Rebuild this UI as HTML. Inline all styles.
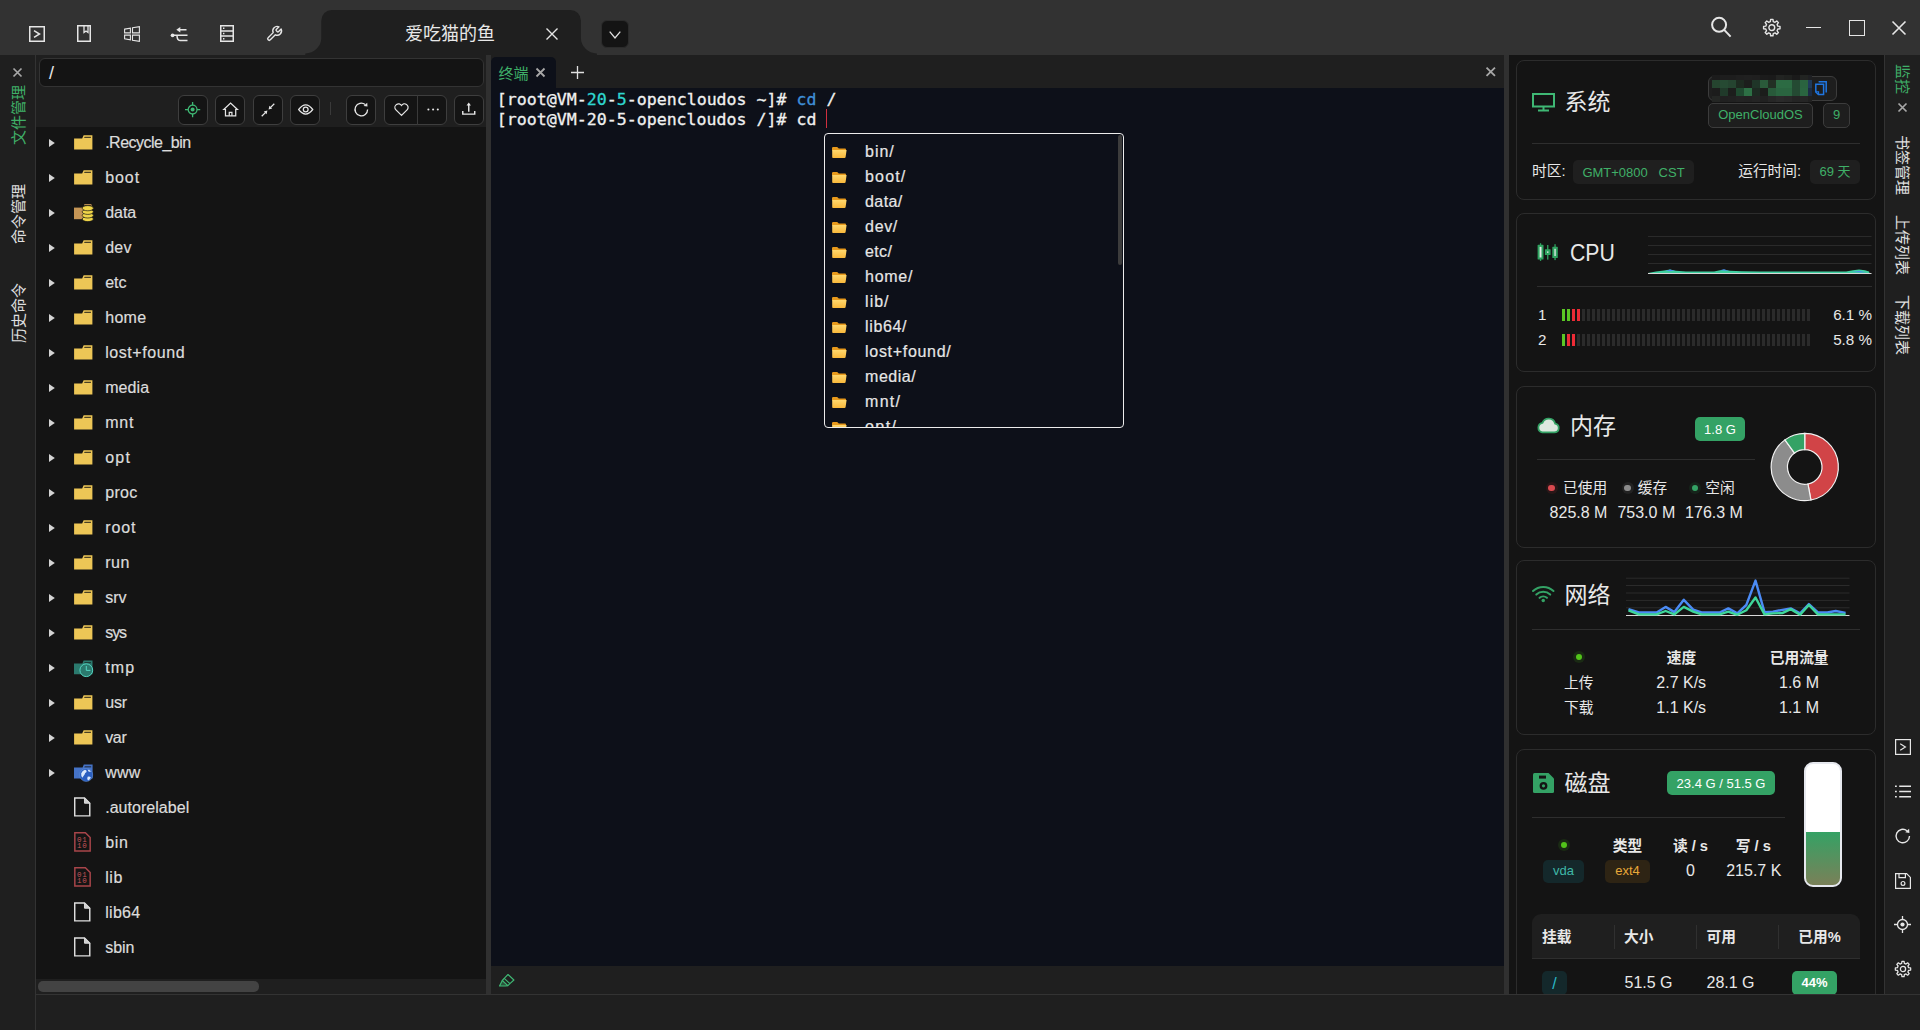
<!DOCTYPE html><html lang="zh"><head><meta charset="utf-8"><title>terminal</title><style>
*{box-sizing:border-box;margin:0;padding:0}
html,body{width:1920px;height:1030px;overflow:hidden;background:#1f1f1f}
body{position:relative;font-family:"Liberation Sans","Noto Sans CJK SC",sans-serif;color:#e0e0e0;font-size:15px;line-height:1}
.a{position:absolute}
.t{position:absolute;white-space:nowrap;line-height:1}
.c{transform:translate(-50%,-50%)}
.cy{transform:translateY(-50%)}
.b{font-weight:bold}
.g{color:#3fb068}
svg{position:absolute;overflow:visible}
.btn{position:absolute;top:95px;height:30px;width:30px;background:#141414;border:1px solid #3e3e3e;border-radius:6px}
.card{position:absolute;left:1516px;width:360px;border:1px solid #2c2c2c;border-radius:8px;background:#141414}
.hr{position:absolute;height:1px;background:#2e2e2e}
.tag{position:absolute;border-radius:5px;text-align:center;white-space:nowrap}
.mono{font-family:"DejaVu Sans Mono","Liberation Mono",monospace}
.row{position:absolute;left:36px;width:450px;height:35px}
.row svg{margin-top:0.5px}
.nm{position:absolute;left:69px;top:9px;line-height:20px;white-space:nowrap;font-size:16px;color:#dcdcdc;-webkit-text-stroke:0.2px}
.pi{position:absolute;left:865px;line-height:20px;white-space:nowrap;font-size:16px;color:#e6e6e6;-webkit-text-stroke:0.2px}
</style></head><body>
<div class="a" style="left:0;top:0;width:1920px;height:55px;background:#323232"></div>
<svg style="left:300px;top:0" width="310" height="55" viewBox="300 0 310 55"><path d="M305.3 55 V53.4 A16 15.6 0 0 0 321.3 37.8 V20.4 A10.5 10.5 0 0 1 331.8 9.9 H570.4 A10.5 10.5 0 0 1 580.9 20.4 V37.8 A16 15.6 0 0 0 596.9 53.4 V55 Z" fill="#1f1f1f"/></svg>
<div class="t c" style="left:450px;top:33.5px;font-size:18px;color:#e8e8e8">爱吃猫的鱼</div>
<svg style="left:545.7px;top:27.8px" width="12" height="12" viewBox="0 0 12 12"><path d="M0.5 0.5 L11.5 11.5 M11.5 0.5 L0.5 11.5" stroke="#e6e6e6" stroke-width="1.4" fill="none"/></svg>
<div class="a" style="left:601px;top:19.6px;width:28.3px;height:28.3px;background:#141414;border:1px solid #2b2b2b;border-radius:6px"></div>
<svg style="left:609px;top:30.6px" width="12" height="8" viewBox="0 0 12 8"><path d="M0.7 0.7 L6 7 L11.3 0.7" stroke="#e0e0e0" stroke-width="1.3" fill="none"/></svg>
<svg style="left:29px;top:26px" width="16" height="16" viewBox="0 0 16 16" fill="none" stroke="#e6e6e6" stroke-width="1.5"><rect x="0.75" y="0.75" width="14.5" height="14.5"/><path d="M5 4.6 L10.5 8 L5 11.4"/></svg>
<svg style="left:77px;top:25px" width="14" height="17" viewBox="0 0 14 17" fill="none" stroke="#e6e6e6" stroke-width="1.5"><rect x="0.75" y="0.75" width="12.5" height="15.5"/><path d="M7 0.75 V7.5 L9 6 L11 7.5 V0.75" stroke-width="1.3"/></svg>
<svg style="left:124px;top:26px" width="16" height="16" viewBox="0 0 16 16" fill="none" stroke="#e6e6e6" stroke-width="1.1"><path d="M0.6 3.1 L6.4 2.1 V6.9 H0.6 Z M8.5 1.8 L15.4 0.6 V6.9 H8.5 Z M0.6 9.1 H6.4 V13.9 L0.6 12.9 Z M8.5 9.1 H15.4 V15.4 L8.5 14.2 Z"/></svg>
<svg style="left:170px;top:26px" width="19" height="16" viewBox="0 0 19 16" fill="none" stroke="#e6e6e6" stroke-width="1.5"><circle cx="2.6" cy="9.3" r="1.9" fill="#e6e6e6" stroke="none"/><path d="M3 9.3 H17.5 M9 3.7 H16.5 M7 9.3 Q7 14.5 10 14.5 H17.5"/><path d="M6.3 3.7 L10.3 1 V6.4 Z" fill="#e6e6e6" stroke="none"/></svg>
<svg style="left:220px;top:25px" width="14" height="17" viewBox="0 0 14 17" fill="none" stroke="#e6e6e6" stroke-width="1.5"><rect x="0.75" y="0.75" width="12.5" height="15.5"/><path d="M0.75 5.9 H13.25 M0.75 11.1 H13.25"/><path d="M3 3.3 h1.4 M3 8.5 h1.4 M3 13.7 h1.4" stroke-width="1.4"/></svg>
<svg style="left:265px;top:25px" width="18.5" height="17.5" viewBox="0 0 24 24" fill="none" stroke="#e6e6e6" stroke-width="1.9" stroke-linejoin="round"><path d="M14.7 6.3a1 1 0 0 0 0 1.4l1.6 1.6a1 1 0 0 0 1.4 0l3.77-3.77a6 6 0 0 1-7.94 7.94l-6.91 6.91a2.12 2.12 0 0 1-3-3l6.91-6.91a6 6 0 0 1 7.94-7.94l-3.76 3.76z"/></svg>
<svg style="left:1710px;top:16px" width="22" height="22" viewBox="0 0 22 22" fill="none" stroke="#e6e6e6" stroke-width="2"><circle cx="9.1" cy="8.8" r="7"/><path d="M14.2 13.9 L20.6 20.6"/></svg>
<svg style="left:1762px;top:18px" width="20" height="20" viewBox="0 0 20 20" fill="none" stroke="#e6e6e6" stroke-width="1.4" stroke-linejoin="round"><path d="M8.35 3.57 L8.63 1.38 L10.97 1.38 L11.25 3.57 L13.04 4.31 L14.78 2.96 L16.44 4.62 L15.09 6.36 L15.83 8.15 L18.02 8.43 L18.02 10.77 L15.83 11.05 L15.09 12.84 L16.44 14.58 L14.78 16.24 L13.04 14.89 L11.25 15.63 L10.97 17.82 L8.63 17.82 L8.35 15.63 L6.56 14.89 L4.82 16.24 L3.16 14.58 L4.51 12.84 L3.77 11.05 L1.58 10.77 L1.58 8.43 L3.77 8.15 L4.51 6.36 L3.16 4.62 L4.82 2.96 L6.56 4.31 Z"/><circle cx="9.8" cy="9.6" r="2.9"/></svg>
<div class="a" style="left:1806px;top:27px;width:15px;height:1.4px;background:#e6e6e6"></div>
<div class="a" style="left:1849px;top:20px;width:16px;height:16px;border:1.6px solid #e6e6e6"></div>
<svg style="left:1892px;top:21px" width="14" height="14" viewBox="0 0 14 14"><path d="M0.5 0.5 L13.5 13.5 M13.5 0.5 L0.5 13.5" stroke="#e6e6e6" stroke-width="1.6" fill="none"/></svg>
<div class="a" style="left:0;top:55px;width:36px;height:975px;background:#1f1f1f;border-right:1px solid #333"></div>
<svg style="left:12.7px;top:67.7px" width="9" height="9" viewBox="0 0 9 9"><path d="M0.5 0.5 L8.5 8.5 M8.5 0.5 L0.5 8.5" stroke="#a8a8a8" stroke-width="1.7" fill="none"/></svg>
<div class="t g" style="left:18.2px;top:114.8px;font-size:15px;transform:translate(-50%,-50%) rotate(-90deg)">文件管理</div>
<div class="t " style="left:18.2px;top:213.8px;font-size:15px;transform:translate(-50%,-50%) rotate(-90deg)">命令管理</div>
<div class="t " style="left:18.2px;top:313.2px;font-size:15px;transform:translate(-50%,-50%) rotate(-90deg)">历史命令</div>
<div class="a" style="left:36px;top:55px;width:450px;height:72px;background:#1f1f1f"></div>
<div class="a" style="left:36px;top:127px;width:450px;height:852px;background:#141414"></div>
<div class="a" style="left:39px;top:58px;width:445px;height:29px;background:#141414;border:1px solid #333;border-radius:6px"></div>
<div class="t cy" style="left:49px;top:73.4px;font-size:18px;color:#e8e8e8">/</div>
<div class="btn" style="left:178px;width:30px"></div>
<div class="btn" style="left:215px;width:30px"></div>
<div class="btn" style="left:253px;width:30px"></div>
<div class="btn" style="left:290px;width:30px"></div>
<div class="btn" style="left:346px;width:30px"></div>
<div class="btn" style="left:454px;width:30px"></div>
<div class="btn" style="left:384px;width:63px"></div><div class="a" style="left:417px;top:95px;width:1px;height:30px;background:#3a3a3a"></div>
<div class="a" style="left:330px;top:102px;width:1px;height:13px;background:#3a3a3a"></div>
<svg style="left:185px;top:102px" width="16" height="16" viewBox="0 0 16 16" fill="none" stroke="#3fb874" stroke-width="1.3"><circle cx="7.6" cy="7.6" r="4.4"/><circle cx="7.6" cy="7.6" r="2" fill="#3fb874" stroke="none"/><path d="M7.6 0 V3.2 M7.6 12 V15.2 M0 7.6 H3.2 M12 7.6 H15.2"/></svg>
<svg style="left:223px;top:102px" width="15.2" height="14.8" viewBox="0 0 16 15" fill="none" stroke="#e6e6e6" stroke-width="1.3"><path d="M0.8 7.6 L8 0.9 L15.2 7.6 H13.4 V14.2 H2.6 V7.6 Z"/><path d="M6.6 14.2 V10.6 H9.4 V14.2"/></svg>
<svg style="left:260.5px;top:103px" width="14" height="14" viewBox="0 0 14 14" fill="#e6e6e6" stroke="#e6e6e6" stroke-width="1.3"><path d="M13.3 0.7 L9.6 4.4 M0.7 13.3 L4.4 9.6" fill="none"/><path d="M7.6 6.4 L8.4 2.8 L11.2 5.6 Z M6.4 7.6 L5.6 11.2 L2.8 8.4 Z" stroke="none"/></svg>
<svg style="left:297.8px;top:104px" width="15.4" height="11" viewBox="0 0 16 11" fill="none" stroke="#e6e6e6" stroke-width="1.3"><path d="M0.7 5.5 Q8 -4 15.3 5.5 Q8 15 0.7 5.5 Z"/><circle cx="8" cy="5.5" r="2.5"/></svg>
<svg style="left:354.3px;top:101.9px" width="15" height="15" viewBox="0 0 15 15" fill="none" stroke="#e6e6e6" stroke-width="1.3"><path d="M13.6 7.5 A6.3 6.3 0 1 1 11.2 2.55"/><path d="M9.6 3.9 L13.5 4.6 L13.2 0.7 Z" fill="#e6e6e6" stroke="none"/></svg>
<svg style="left:393.8px;top:103px" width="15" height="13.2" viewBox="0 0 16 14" fill="none" stroke="#e6e6e6" stroke-width="1.3"><path d="M8 13.2 L1.6 6.8 A3.7 3.7 0 0 1 8 2.6 A3.7 3.7 0 0 1 14.4 6.8 Z"/></svg>
<svg style="left:426.5px;top:108px" width="13" height="3" viewBox="0 0 13 3" fill="#e6e6e6"><circle cx="1.4" cy="1.5" r="1.05"/><circle cx="6.1" cy="1.5" r="1.05"/><circle cx="10.8" cy="1.5" r="1.05"/></svg>
<svg style="left:461.7px;top:102px" width="13.5" height="13.5" viewBox="0 0 14 14" fill="none" stroke="#e6e6e6" stroke-width="1.5"><path d="M0.8 9.4 V12.6 H13.2 V9.4"/><path d="M7 10 V2.4"/><path d="M4.7 3.6 L7 0.6 L9.3 3.6 Z" fill="#e6e6e6" stroke="none"/></svg>
<div class="row" style="top:124px"><svg style="left:12.6px;top:14px" width="6" height="8" viewBox="0 0 6 8"><path d="M0 0 L5.8 4 L0 8 Z" fill="#d4d4d4"/></svg><svg style="left:37.8px;top:10.3px" width="18.7" height="14.6" viewBox="0 0 19 15"><path d="M0 3.6 H8.3 L9.8 0.3 H18.8 V14.8 H0 Z" fill="#edc656"/><path d="M10.8 1.9 H17.3 V3.1 H10.2 Z" fill="#141414" opacity=".75"/></svg><span class="nm" style="left:69.20px;letter-spacing:-0.51px">.Recycle_bin</span></div>
<div class="row" style="top:159px"><svg style="left:12.6px;top:14px" width="6" height="8" viewBox="0 0 6 8"><path d="M0 0 L5.8 4 L0 8 Z" fill="#d4d4d4"/></svg><svg style="left:37.8px;top:10.3px" width="18.7" height="14.6" viewBox="0 0 19 15"><path d="M0 3.6 H8.3 L9.8 0.3 H18.8 V14.8 H0 Z" fill="#edc656"/><path d="M10.8 1.9 H17.3 V3.1 H10.2 Z" fill="#141414" opacity=".75"/></svg><span class="nm" style="left:69.20px;letter-spacing:0.92px">boot</span></div>
<div class="row" style="top:194px"><svg style="left:12.6px;top:14px" width="6" height="8" viewBox="0 0 6 8"><path d="M0 0 L5.8 4 L0 8 Z" fill="#d4d4d4"/></svg><svg style="left:37.8px;top:7.5px" width="20" height="22" viewBox="0 0 20 22"><path d="M0 5.6 H9.3 V17.2 H0 Z" fill="#c59555"/><path d="M10.5 3.4 V2.6 H17.2 V4" stroke="#c59555" stroke-width="1" fill="none"/><g fill="#f0d548" stroke="#141414" stroke-width="0.7"><ellipse cx="13.8" cy="17" rx="5.6" ry="2.6"/><ellipse cx="13.8" cy="13.4" rx="5.6" ry="2.6"/><ellipse cx="13.8" cy="9.8" rx="5.6" ry="2.6"/><ellipse cx="13.8" cy="6.2" rx="5.6" ry="2.6"/></g></svg><span class="nm" style="left:69.20px;letter-spacing:-0.05px">data</span></div>
<div class="row" style="top:229px"><svg style="left:12.6px;top:14px" width="6" height="8" viewBox="0 0 6 8"><path d="M0 0 L5.8 4 L0 8 Z" fill="#d4d4d4"/></svg><svg style="left:37.8px;top:10.3px" width="18.7" height="14.6" viewBox="0 0 19 15"><path d="M0 3.6 H8.3 L9.8 0.3 H18.8 V14.8 H0 Z" fill="#edc656"/><path d="M10.8 1.9 H17.3 V3.1 H10.2 Z" fill="#141414" opacity=".75"/></svg><span class="nm" style="left:69.20px;letter-spacing:0.23px">dev</span></div>
<div class="row" style="top:264px"><svg style="left:12.6px;top:14px" width="6" height="8" viewBox="0 0 6 8"><path d="M0 0 L5.8 4 L0 8 Z" fill="#d4d4d4"/></svg><svg style="left:37.8px;top:10.3px" width="18.7" height="14.6" viewBox="0 0 19 15"><path d="M0 3.6 H8.3 L9.8 0.3 H18.8 V14.8 H0 Z" fill="#edc656"/><path d="M10.8 1.9 H17.3 V3.1 H10.2 Z" fill="#141414" opacity=".75"/></svg><span class="nm" style="left:69.20px;letter-spacing:-0.04px">etc</span></div>
<div class="row" style="top:299px"><svg style="left:12.6px;top:14px" width="6" height="8" viewBox="0 0 6 8"><path d="M0 0 L5.8 4 L0 8 Z" fill="#d4d4d4"/></svg><svg style="left:37.8px;top:10.3px" width="18.7" height="14.6" viewBox="0 0 19 15"><path d="M0 3.6 H8.3 L9.8 0.3 H18.8 V14.8 H0 Z" fill="#edc656"/><path d="M10.8 1.9 H17.3 V3.1 H10.2 Z" fill="#141414" opacity=".75"/></svg><span class="nm" style="left:69.20px;letter-spacing:0.30px">home</span></div>
<div class="row" style="top:334px"><svg style="left:12.6px;top:14px" width="6" height="8" viewBox="0 0 6 8"><path d="M0 0 L5.8 4 L0 8 Z" fill="#d4d4d4"/></svg><svg style="left:37.8px;top:10.3px" width="18.7" height="14.6" viewBox="0 0 19 15"><path d="M0 3.6 H8.3 L9.8 0.3 H18.8 V14.8 H0 Z" fill="#edc656"/><path d="M10.8 1.9 H17.3 V3.1 H10.2 Z" fill="#141414" opacity=".75"/></svg><span class="nm" style="left:69.20px;letter-spacing:0.57px">lost+found</span></div>
<div class="row" style="top:369px"><svg style="left:12.6px;top:14px" width="6" height="8" viewBox="0 0 6 8"><path d="M0 0 L5.8 4 L0 8 Z" fill="#d4d4d4"/></svg><svg style="left:37.8px;top:10.3px" width="18.7" height="14.6" viewBox="0 0 19 15"><path d="M0 3.6 H8.3 L9.8 0.3 H18.8 V14.8 H0 Z" fill="#edc656"/><path d="M10.8 1.9 H17.3 V3.1 H10.2 Z" fill="#141414" opacity=".75"/></svg><span class="nm" style="left:69.20px;letter-spacing:0.09px">media</span></div>
<div class="row" style="top:404px"><svg style="left:12.6px;top:14px" width="6" height="8" viewBox="0 0 6 8"><path d="M0 0 L5.8 4 L0 8 Z" fill="#d4d4d4"/></svg><svg style="left:37.8px;top:10.3px" width="18.7" height="14.6" viewBox="0 0 19 15"><path d="M0 3.6 H8.3 L9.8 0.3 H18.8 V14.8 H0 Z" fill="#edc656"/><path d="M10.8 1.9 H17.3 V3.1 H10.2 Z" fill="#141414" opacity=".75"/></svg><span class="nm" style="left:69.20px;letter-spacing:0.84px">mnt</span></div>
<div class="row" style="top:439px"><svg style="left:12.6px;top:14px" width="6" height="8" viewBox="0 0 6 8"><path d="M0 0 L5.8 4 L0 8 Z" fill="#d4d4d4"/></svg><svg style="left:37.8px;top:10.3px" width="18.7" height="14.6" viewBox="0 0 19 15"><path d="M0 3.6 H8.3 L9.8 0.3 H18.8 V14.8 H0 Z" fill="#edc656"/><path d="M10.8 1.9 H17.3 V3.1 H10.2 Z" fill="#141414" opacity=".75"/></svg><span class="nm" style="left:69.20px;letter-spacing:1.27px">opt</span></div>
<div class="row" style="top:474px"><svg style="left:12.6px;top:14px" width="6" height="8" viewBox="0 0 6 8"><path d="M0 0 L5.8 4 L0 8 Z" fill="#d4d4d4"/></svg><svg style="left:37.8px;top:10.3px" width="18.7" height="14.6" viewBox="0 0 19 15"><path d="M0 3.6 H8.3 L9.8 0.3 H18.8 V14.8 H0 Z" fill="#edc656"/><path d="M10.8 1.9 H17.3 V3.1 H10.2 Z" fill="#141414" opacity=".75"/></svg><span class="nm" style="left:69.20px;letter-spacing:0.33px">proc</span></div>
<div class="row" style="top:509px"><svg style="left:12.6px;top:14px" width="6" height="8" viewBox="0 0 6 8"><path d="M0 0 L5.8 4 L0 8 Z" fill="#d4d4d4"/></svg><svg style="left:37.8px;top:10.3px" width="18.7" height="14.6" viewBox="0 0 19 15"><path d="M0 3.6 H8.3 L9.8 0.3 H18.8 V14.8 H0 Z" fill="#edc656"/><path d="M10.8 1.9 H17.3 V3.1 H10.2 Z" fill="#141414" opacity=".75"/></svg><span class="nm" style="left:69.20px;letter-spacing:0.89px">root</span></div>
<div class="row" style="top:544px"><svg style="left:12.6px;top:14px" width="6" height="8" viewBox="0 0 6 8"><path d="M0 0 L5.8 4 L0 8 Z" fill="#d4d4d4"/></svg><svg style="left:37.8px;top:10.3px" width="18.7" height="14.6" viewBox="0 0 19 15"><path d="M0 3.6 H8.3 L9.8 0.3 H18.8 V14.8 H0 Z" fill="#edc656"/><path d="M10.8 1.9 H17.3 V3.1 H10.2 Z" fill="#141414" opacity=".75"/></svg><span class="nm" style="left:69.20px;letter-spacing:0.54px">run</span></div>
<div class="row" style="top:579px"><svg style="left:12.6px;top:14px" width="6" height="8" viewBox="0 0 6 8"><path d="M0 0 L5.8 4 L0 8 Z" fill="#d4d4d4"/></svg><svg style="left:37.8px;top:10.3px" width="18.7" height="14.6" viewBox="0 0 19 15"><path d="M0 3.6 H8.3 L9.8 0.3 H18.8 V14.8 H0 Z" fill="#edc656"/><path d="M10.8 1.9 H17.3 V3.1 H10.2 Z" fill="#141414" opacity=".75"/></svg><span class="nm" style="left:69.20px;letter-spacing:-0.04px">srv</span></div>
<div class="row" style="top:614px"><svg style="left:12.6px;top:14px" width="6" height="8" viewBox="0 0 6 8"><path d="M0 0 L5.8 4 L0 8 Z" fill="#d4d4d4"/></svg><svg style="left:37.8px;top:10.3px" width="18.7" height="14.6" viewBox="0 0 19 15"><path d="M0 3.6 H8.3 L9.8 0.3 H18.8 V14.8 H0 Z" fill="#edc656"/><path d="M10.8 1.9 H17.3 V3.1 H10.2 Z" fill="#141414" opacity=".75"/></svg><span class="nm" style="left:69.20px;letter-spacing:-1.05px">sys</span></div>
<div class="row" style="top:649px"><svg style="left:12.6px;top:14px" width="6" height="8" viewBox="0 0 6 8"><path d="M0 0 L5.8 4 L0 8 Z" fill="#d4d4d4"/></svg><svg style="left:37.8px;top:8px" width="20" height="20" viewBox="0 0 20 20"><path d="M0 5.4 H8.4 L9.6 2.5 H18.5 V16.3 H0 Z" fill="#2b7a6e"/><path d="M10.6 4 H17 V5.2 H10.1 Z" fill="#141414" opacity=".6"/><circle cx="12.3" cy="12.2" r="6.4" fill="#2b7a6e" stroke="#55d6c2" stroke-width="1"/><path d="M12.3 8 V12.4 H16.4" stroke="#55d6c2" stroke-width="1" fill="none"/></svg><span class="nm" style="left:69.20px;letter-spacing:1.19px">tmp</span></div>
<div class="row" style="top:684px"><svg style="left:12.6px;top:14px" width="6" height="8" viewBox="0 0 6 8"><path d="M0 0 L5.8 4 L0 8 Z" fill="#d4d4d4"/></svg><svg style="left:37.8px;top:10.3px" width="18.7" height="14.6" viewBox="0 0 19 15"><path d="M0 3.6 H8.3 L9.8 0.3 H18.8 V14.8 H0 Z" fill="#edc656"/><path d="M10.8 1.9 H17.3 V3.1 H10.2 Z" fill="#141414" opacity=".75"/></svg><span class="nm" style="left:69.20px;letter-spacing:-0.12px">usr</span></div>
<div class="row" style="top:719px"><svg style="left:12.6px;top:14px" width="6" height="8" viewBox="0 0 6 8"><path d="M0 0 L5.8 4 L0 8 Z" fill="#d4d4d4"/></svg><svg style="left:37.8px;top:10.3px" width="18.7" height="14.6" viewBox="0 0 19 15"><path d="M0 3.6 H8.3 L9.8 0.3 H18.8 V14.8 H0 Z" fill="#edc656"/><path d="M10.8 1.9 H17.3 V3.1 H10.2 Z" fill="#141414" opacity=".75"/></svg><span class="nm" style="left:69.20px;letter-spacing:-0.33px">var</span></div>
<div class="row" style="top:754px"><svg style="left:12.6px;top:14px" width="6" height="8" viewBox="0 0 6 8"><path d="M0 0 L5.8 4 L0 8 Z" fill="#d4d4d4"/></svg><svg style="left:37.8px;top:8px" width="20" height="20" viewBox="0 0 20 20"><path d="M0 4.6 H8.6 L9.8 1.6 H18.6 V15.6 H0 Z" fill="#4573c7"/><path d="M10.8 3 H17.2 V4.4 H10.3 Z" fill="#141414" opacity=".55"/><circle cx="12.2" cy="12" r="6.5" fill="#2b5fc0"/><circle cx="12.2" cy="12" r="6.5" fill="none" stroke="#6ea0e8" stroke-width=".6" opacity=".7"/><path d="M7.2 10.2 q1.2 -2.8 3.8 -3.4 q2 .4 1.6 2.2 q-1.8 .6 -2 2.4 q-1.4 1.6 -2.2 3.4 q-1.6 -2 -1.2 -4.6 Z M13.6 13.8 q1.8 -.8 3.2 .4 q-.4 2.4 -2.6 3.4 q-1.6 -1.4 -.6 -3.8 Z M13.6 6.4 q2 .2 3.4 2 q-1.6 .8 -2.6 -.2 Z" fill="#e6f1ff" opacity=".95"/></svg><span class="nm" style="left:69.33px;letter-spacing:0.21px">www</span></div>
<div class="row" style="top:789px"><svg style="left:38.2px;top:7.8px" width="16.5" height="19.8" viewBox="0 0 17 20" fill="none" stroke="#dedede" stroke-width="1.5"><path d="M0.75 0.75 H10.8 L16.25 6.2 V19.25 H0.75 Z"/><path d="M10.8 0.75 V6.2 H16.25 Z" fill="#cfcfcf" stroke-width="1"/></svg><span class="nm" style="left:69.20px;letter-spacing:0.04px">.autorelabel</span></div>
<div class="row" style="top:824px"><svg style="left:38px;top:7.9px" width="17" height="19.8" viewBox="0 0 17 20" fill="none" stroke="#a8454a" stroke-width="1.5"><path d="M0.75 0.75 H11.4 L16.25 5.6 V19.25 H0.75 Z"/><text x="3" y="9.9" font-family="Liberation Mono,monospace" font-size="7.6" letter-spacing=".6" fill="#c4545a" stroke="none">01</text><text x="3" y="16.2" font-family="Liberation Mono,monospace" font-size="7.6" letter-spacing=".6" fill="#c4545a" stroke="none">10</text></svg><span class="nm" style="left:69.20px;letter-spacing:0.71px">bin</span></div>
<div class="row" style="top:859px"><svg style="left:38px;top:7.9px" width="17" height="19.8" viewBox="0 0 17 20" fill="none" stroke="#a8454a" stroke-width="1.5"><path d="M0.75 0.75 H11.4 L16.25 5.6 V19.25 H0.75 Z"/><text x="3" y="9.9" font-family="Liberation Mono,monospace" font-size="7.6" letter-spacing=".6" fill="#c4545a" stroke="none">01</text><text x="3" y="16.2" font-family="Liberation Mono,monospace" font-size="7.6" letter-spacing=".6" fill="#c4545a" stroke="none">10</text></svg><span class="nm" style="left:69.20px;letter-spacing:0.55px">lib</span></div>
<div class="row" style="top:894px"><svg style="left:38.2px;top:7.8px" width="16.5" height="19.8" viewBox="0 0 17 20" fill="none" stroke="#dedede" stroke-width="1.5"><path d="M0.75 0.75 H10.8 L16.25 6.2 V19.25 H0.75 Z"/><path d="M10.8 0.75 V6.2 H16.25 Z" fill="#cfcfcf" stroke-width="1"/></svg><span class="nm" style="left:69.20px;letter-spacing:0.29px">lib64</span></div>
<div class="row" style="top:929px"><svg style="left:38.2px;top:7.8px" width="16.5" height="19.8" viewBox="0 0 17 20" fill="none" stroke="#dedede" stroke-width="1.5"><path d="M0.75 0.75 H10.8 L16.25 6.2 V19.25 H0.75 Z"/><path d="M10.8 0.75 V6.2 H16.25 Z" fill="#cfcfcf" stroke-width="1"/></svg><span class="nm" style="left:69.20px;letter-spacing:-0.06px">sbin</span></div>
<div class="a" style="left:36px;top:979px;width:450px;height:15px;background:#1f1f1f"></div>
<div class="a" style="left:38px;top:981px;width:221px;height:10.5px;background:#434343;border-radius:5px"></div>
<div class="a" style="left:486px;top:55px;width:5px;height:939px;background:#303030"></div>
<div class="a" style="left:491px;top:55px;width:1013px;height:33px;background:#1f1f1f"></div>
<div class="a" style="left:491px;top:57px;width:65px;height:31px;background:#0d1019;border-radius:5px 5px 0 0"></div>
<div class="t cy g" style="left:498.5px;top:72.5px;font-size:15px">终端</div>
<svg style="left:536px;top:68.1px" width="9" height="9" viewBox="0 0 9 9"><path d="M0.5 0.5 L8.5 8.5 M8.5 0.5 L0.5 8.5" stroke="#a8a8a8" stroke-width="1.8" fill="none"/></svg>
<svg style="left:571.2px;top:65.8px" width="13" height="13" viewBox="0 0 13 13"><path d="M6.5 0 V13 M0 6.5 H13" stroke="#e0e0e0" stroke-width="1.3" fill="none"/></svg>
<svg style="left:1486px;top:67px" width="9.5" height="9.5" viewBox="0 0 9 9"><path d="M0.5 0.5 L8.5 8.5 M8.5 0.5 L0.5 8.5" stroke="#a8a8a8" stroke-width="1.7" fill="none"/></svg>
<div class="a" style="left:491px;top:88px;width:1013px;height:878px;background:#0d1019"></div>
<div class="a" style="left:491px;top:966px;width:1013px;height:28px;background:#1f1f1f"></div>
<div class="t mono" style="left:496.8px;top:89.8px;font-size:16.6px;line-height:20.3px;color:#f0f0f0;white-space:pre;-webkit-text-stroke:0.3px">[root@VM-<span style="color:#2fd6d0">20</span>-<span style="color:#2fd6d0">5</span>-opencloudos ~]# <span style="color:#3f8fd8">cd</span> /<br>[root@VM-20-5-opencloudos /]# cd </div>
<div class="a" style="left:826px;top:108.5px;width:1.3px;height:19px;background:#d02f3f"></div>
<svg style="left:499px;top:974.3px" width="16" height="13" viewBox="0 0 16 13" fill="none" stroke="#3fb874" stroke-width="1.15" stroke-linejoin="round"><path d="M9 0.5 L14.9 6 L10.9 9.7 L5.2 4.3 Z"/><path d="M5.2 4.3 L3.3 6.5 L8.9 11.6 L10.9 9.7"/><path d="M3.3 6.5 L0.5 12 H6.4 L8.9 11.6" fill="#3fb874" fill-opacity=".35"/></svg>
<div class="a" style="left:824px;top:133px;width:300px;height:295px;background:#0d1019;border:1.5px solid #ececec;border-radius:4px;overflow:hidden"></div>
<div class="a" style="left:1118px;top:135px;width:4px;height:130px;background:#3c3c3c;border-radius:2px"></div>
<div class="a" style="left:825.5px;top:134.5px;width:297px;height:292px;overflow:hidden">
<svg style="left:6.5px;top:12.0px" width="15" height="11" viewBox="0 0 15 11"><defs><linearGradient id="fg0" x1="0" y1="0" x2="0" y2="1"><stop offset="0" stop-color="#ffd86e"/><stop offset="1" stop-color="#f9b83a"/></linearGradient></defs><path d="M0 1.2 Q0 0 1.2 0 H5.2 L6.8 1.6 H13 Q14 1.6 14 2.6 V3.4 H0 Z" fill="#e89a1c"/><path d="M0.2 3 H14.6 L13.6 10 Q13.5 11 12.5 11 H1 Q0.2 11 0.2 10 Z" fill="url(#fg0)"/></svg>
<span class="pi" style="left:39.60px;top:7.5px;letter-spacing:0.97px">bin/</span>
<svg style="left:6.5px;top:37.0px" width="15" height="11" viewBox="0 0 15 11"><defs><linearGradient id="fg1" x1="0" y1="0" x2="0" y2="1"><stop offset="0" stop-color="#ffd86e"/><stop offset="1" stop-color="#f9b83a"/></linearGradient></defs><path d="M0 1.2 Q0 0 1.2 0 H5.2 L6.8 1.6 H13 Q14 1.6 14 2.6 V3.4 H0 Z" fill="#e89a1c"/><path d="M0.2 3 H14.6 L13.6 10 Q13.5 11 12.5 11 H1 Q0.2 11 0.2 10 Z" fill="url(#fg1)"/></svg>
<span class="pi" style="left:39.60px;top:32.5px;letter-spacing:1.12px">boot/</span>
<svg style="left:6.5px;top:62.0px" width="15" height="11" viewBox="0 0 15 11"><defs><linearGradient id="fg2" x1="0" y1="0" x2="0" y2="1"><stop offset="0" stop-color="#ffd86e"/><stop offset="1" stop-color="#f9b83a"/></linearGradient></defs><path d="M0 1.2 Q0 0 1.2 0 H5.2 L6.8 1.6 H13 Q14 1.6 14 2.6 V3.4 H0 Z" fill="#e89a1c"/><path d="M0.2 3 H14.6 L13.6 10 Q13.5 11 12.5 11 H1 Q0.2 11 0.2 10 Z" fill="url(#fg2)"/></svg>
<span class="pi" style="left:39.60px;top:57.5px;letter-spacing:0.37px">data/</span>
<svg style="left:6.5px;top:87.0px" width="15" height="11" viewBox="0 0 15 11"><defs><linearGradient id="fg3" x1="0" y1="0" x2="0" y2="1"><stop offset="0" stop-color="#ffd86e"/><stop offset="1" stop-color="#f9b83a"/></linearGradient></defs><path d="M0 1.2 Q0 0 1.2 0 H5.2 L6.8 1.6 H13 Q14 1.6 14 2.6 V3.4 H0 Z" fill="#e89a1c"/><path d="M0.2 3 H14.6 L13.6 10 Q13.5 11 12.5 11 H1 Q0.2 11 0.2 10 Z" fill="url(#fg3)"/></svg>
<span class="pi" style="left:39.60px;top:82.5px;letter-spacing:0.65px">dev/</span>
<svg style="left:6.5px;top:112.0px" width="15" height="11" viewBox="0 0 15 11"><defs><linearGradient id="fg4" x1="0" y1="0" x2="0" y2="1"><stop offset="0" stop-color="#ffd86e"/><stop offset="1" stop-color="#f9b83a"/></linearGradient></defs><path d="M0 1.2 Q0 0 1.2 0 H5.2 L6.8 1.6 H13 Q14 1.6 14 2.6 V3.4 H0 Z" fill="#e89a1c"/><path d="M0.2 3 H14.6 L13.6 10 Q13.5 11 12.5 11 H1 Q0.2 11 0.2 10 Z" fill="url(#fg4)"/></svg>
<span class="pi" style="left:39.60px;top:107.5px;letter-spacing:0.34px">etc/</span>
<svg style="left:6.5px;top:137.0px" width="15" height="11" viewBox="0 0 15 11"><defs><linearGradient id="fg5" x1="0" y1="0" x2="0" y2="1"><stop offset="0" stop-color="#ffd86e"/><stop offset="1" stop-color="#f9b83a"/></linearGradient></defs><path d="M0 1.2 Q0 0 1.2 0 H5.2 L6.8 1.6 H13 Q14 1.6 14 2.6 V3.4 H0 Z" fill="#e89a1c"/><path d="M0.2 3 H14.6 L13.6 10 Q13.5 11 12.5 11 H1 Q0.2 11 0.2 10 Z" fill="url(#fg5)"/></svg>
<span class="pi" style="left:39.60px;top:132.5px;letter-spacing:0.70px">home/</span>
<svg style="left:6.5px;top:162.0px" width="15" height="11" viewBox="0 0 15 11"><defs><linearGradient id="fg6" x1="0" y1="0" x2="0" y2="1"><stop offset="0" stop-color="#ffd86e"/><stop offset="1" stop-color="#f9b83a"/></linearGradient></defs><path d="M0 1.2 Q0 0 1.2 0 H5.2 L6.8 1.6 H13 Q14 1.6 14 2.6 V3.4 H0 Z" fill="#e89a1c"/><path d="M0.2 3 H14.6 L13.6 10 Q13.5 11 12.5 11 H1 Q0.2 11 0.2 10 Z" fill="url(#fg6)"/></svg>
<span class="pi" style="left:39.60px;top:157.5px;letter-spacing:1.00px">lib/</span>
<svg style="left:6.5px;top:187.0px" width="15" height="11" viewBox="0 0 15 11"><defs><linearGradient id="fg7" x1="0" y1="0" x2="0" y2="1"><stop offset="0" stop-color="#ffd86e"/><stop offset="1" stop-color="#f9b83a"/></linearGradient></defs><path d="M0 1.2 Q0 0 1.2 0 H5.2 L6.8 1.6 H13 Q14 1.6 14 2.6 V3.4 H0 Z" fill="#e89a1c"/><path d="M0.2 3 H14.6 L13.6 10 Q13.5 11 12.5 11 H1 Q0.2 11 0.2 10 Z" fill="url(#fg7)"/></svg>
<span class="pi" style="left:39.60px;top:182.5px;letter-spacing:0.61px">lib64/</span>
<svg style="left:6.5px;top:212.0px" width="15" height="11" viewBox="0 0 15 11"><defs><linearGradient id="fg8" x1="0" y1="0" x2="0" y2="1"><stop offset="0" stop-color="#ffd86e"/><stop offset="1" stop-color="#f9b83a"/></linearGradient></defs><path d="M0 1.2 Q0 0 1.2 0 H5.2 L6.8 1.6 H13 Q14 1.6 14 2.6 V3.4 H0 Z" fill="#e89a1c"/><path d="M0.2 3 H14.6 L13.6 10 Q13.5 11 12.5 11 H1 Q0.2 11 0.2 10 Z" fill="url(#fg8)"/></svg>
<span class="pi" style="left:39.60px;top:207.5px;letter-spacing:0.69px">lost+found/</span>
<svg style="left:6.5px;top:237.0px" width="15" height="11" viewBox="0 0 15 11"><defs><linearGradient id="fg9" x1="0" y1="0" x2="0" y2="1"><stop offset="0" stop-color="#ffd86e"/><stop offset="1" stop-color="#f9b83a"/></linearGradient></defs><path d="M0 1.2 Q0 0 1.2 0 H5.2 L6.8 1.6 H13 Q14 1.6 14 2.6 V3.4 H0 Z" fill="#e89a1c"/><path d="M0.2 3 H14.6 L13.6 10 Q13.5 11 12.5 11 H1 Q0.2 11 0.2 10 Z" fill="url(#fg9)"/></svg>
<span class="pi" style="left:39.60px;top:232.5px;letter-spacing:0.51px">media/</span>
<svg style="left:6.5px;top:262.0px" width="15" height="11" viewBox="0 0 15 11"><defs><linearGradient id="fg10" x1="0" y1="0" x2="0" y2="1"><stop offset="0" stop-color="#ffd86e"/><stop offset="1" stop-color="#f9b83a"/></linearGradient></defs><path d="M0 1.2 Q0 0 1.2 0 H5.2 L6.8 1.6 H13 Q14 1.6 14 2.6 V3.4 H0 Z" fill="#e89a1c"/><path d="M0.2 3 H14.6 L13.6 10 Q13.5 11 12.5 11 H1 Q0.2 11 0.2 10 Z" fill="url(#fg10)"/></svg>
<span class="pi" style="left:39.60px;top:257.5px;letter-spacing:1.22px">mnt/</span>
<svg style="left:6.5px;top:287.0px" width="15" height="11" viewBox="0 0 15 11"><defs><linearGradient id="fg11" x1="0" y1="0" x2="0" y2="1"><stop offset="0" stop-color="#ffd86e"/><stop offset="1" stop-color="#f9b83a"/></linearGradient></defs><path d="M0 1.2 Q0 0 1.2 0 H5.2 L6.8 1.6 H13 Q14 1.6 14 2.6 V3.4 H0 Z" fill="#e89a1c"/><path d="M0.2 3 H14.6 L13.6 10 Q13.5 11 12.5 11 H1 Q0.2 11 0.2 10 Z" fill="url(#fg11)"/></svg>
<span class="pi" style="left:39.60px;top:282.5px;letter-spacing:1.38px">opt/</span>
</div>
<div class="a" style="left:1504px;top:55px;width:5px;height:939px;background:#303030"></div>
<div class="a" style="left:1509px;top:55px;width:375px;height:939px;background:#141414"></div>
<div class="a" style="left:1509px;top:55px;width:375px;height:939px;overflow:hidden">
<div class="card" style="left:7px;top:5px;height:140px"></div>
<svg style="left:23px;top:38px" width="23" height="19" viewBox="0 0 23 19" fill="none" stroke="#3fb874" stroke-width="2"><rect x="1" y="1" width="21" height="12.5"/><path d="M11.5 13.5 V17.6 M6 17.6 H17"/></svg>
<div class="t " style="left:55.5px;top:37px;font-size:23px;line-height:20px;color:#e8e8e8;">系统</div>
<div class="a" style="left:199px;top:21px;width:129px;height:25px;background:#1e1e1e;border:1px solid #3c3c3c;border-radius:6px"></div>
<svg style="left:203px;top:20px" width="100" height="27" viewBox="0 0 100 27" shape-rendering="crispEdges"><rect x="0" y="0" width="8" height="5" fill="#1b1b1b"/><rect x="8" y="0" width="8" height="5" fill="#1d1d1d"/><rect x="16" y="0" width="8" height="5" fill="#1d1d1d"/><rect x="24" y="0" width="8" height="5" fill="#1f1f1f"/><rect x="32" y="0" width="8" height="5" fill="#202020"/><rect x="40" y="0" width="8" height="5" fill="#1f1f1f"/><rect x="48" y="0" width="8" height="5" fill="#1b1b1b"/><rect x="56" y="0" width="8" height="5" fill="#1a1a1a"/><rect x="64" y="0" width="8" height="5" fill="#222422"/><rect x="72" y="0" width="8" height="5" fill="#1f211f"/><rect x="80" y="0" width="8" height="5" fill="#1a1a1a"/><rect x="88" y="0" width="8" height="5" fill="#222422"/><rect x="96" y="0" width="4" height="5" fill="#1e1f22"/><rect x="0" y="5" width="8" height="8" fill="#25442f"/><rect x="8" y="5" width="8" height="8" fill="#264a33"/><rect x="16" y="5" width="8" height="8" fill="#254430"/><rect x="24" y="5" width="8" height="8" fill="#1d2a20"/><rect x="32" y="5" width="8" height="8" fill="#1c1e1c"/><rect x="40" y="5" width="8" height="8" fill="#1f3528"/><rect x="48" y="5" width="8" height="8" fill="#2a5a3a"/><rect x="56" y="5" width="8" height="8" fill="#223024"/><rect x="64" y="5" width="8" height="8" fill="#2c6b43"/><rect x="72" y="5" width="8" height="8" fill="#2c6b43"/><rect x="80" y="5" width="8" height="8" fill="#244a33"/><rect x="88" y="5" width="8" height="8" fill="#2a633f"/><rect x="96" y="5" width="4" height="8" fill="#203a5a"/><rect x="0" y="13" width="8" height="8" fill="#1c1c1c"/><rect x="8" y="13" width="8" height="8" fill="#203a2a"/><rect x="16" y="13" width="8" height="8" fill="#1c1e1c"/><rect x="24" y="13" width="8" height="8" fill="#1f4a30"/><rect x="32" y="13" width="8" height="8" fill="#2d7045"/><rect x="40" y="13" width="8" height="8" fill="#1d2a22"/><rect x="48" y="13" width="8" height="8" fill="#1b1d1b"/><rect x="56" y="13" width="8" height="8" fill="#285a3a"/><rect x="64" y="13" width="8" height="8" fill="#2a6540"/><rect x="72" y="13" width="8" height="8" fill="#2a6540"/><rect x="80" y="13" width="8" height="8" fill="#244a33"/><rect x="88" y="13" width="8" height="8" fill="#2a6540"/><rect x="96" y="13" width="4" height="8" fill="#1c2c45"/><rect x="0" y="21" width="8" height="6" fill="#242624"/><rect x="8" y="21" width="8" height="6" fill="#202020"/><rect x="16" y="21" width="8" height="6" fill="#212121"/><rect x="24" y="21" width="8" height="6" fill="#232323"/><rect x="32" y="21" width="8" height="6" fill="#222222"/><rect x="40" y="21" width="8" height="6" fill="#242424"/><rect x="48" y="21" width="8" height="6" fill="#212121"/><rect x="56" y="21" width="8" height="6" fill="#262626"/><rect x="64" y="21" width="8" height="6" fill="#2a2a2a"/><rect x="72" y="21" width="8" height="6" fill="#282828"/><rect x="80" y="21" width="8" height="6" fill="#242424"/><rect x="88" y="21" width="8" height="6" fill="#252525"/><rect x="96" y="21" width="4" height="6" fill="#202020"/></svg>
<svg style="left:306px;top:26px" width="12" height="14.5" viewBox="0 0 12 14.5" fill="none" stroke="#1f76e2" stroke-width="1.5"><path d="M3.6 0.8 H11.2 V11.4"/><path d="M0.8 3.2 H8.6 V13.6 H3.4 L0.8 11 Z"/><path d="M0.8 10.8 H3.6 V13.4" stroke-width="1.1"/></svg>
<div class="tag" style="left:199px;top:48px;width:105px;height:25px;background:#1e1e1e;border:1px solid #3c3c3c;"></div>
<div class="t " style="left:251.5px;top:50px;font-size:13px;line-height:20px;color:#3fb068;transform:translateX(-50%);">OpenCloudOS</div>
<div class="tag" style="left:314px;top:48px;width:27px;height:25px;background:#1e1e1e;border:1px solid #3c3c3c;"></div>
<div class="t " style="left:327.5px;top:50px;font-size:13px;line-height:20px;color:#3fb068;transform:translateX(-50%);">9</div>
<div class="hr" style="left:23px;top:88px;width:328px"></div>
<div class="t " style="left:23.0px;top:106px;font-size:14.7px;line-height:20px;color:#e8e8e8;">时区:</div>
<div class="tag" style="left:64px;top:105px;width:121px;height:24px;background:#1f1f1f;"></div>
<div class="t " style="left:124.5px;top:108px;font-size:13px;line-height:20px;color:#3fb068;transform:translateX(-50%);">GMT+0800&nbsp;&nbsp;&nbsp;CST</div>
<div class="t " style="left:229.2px;top:106px;font-size:14.7px;line-height:20px;color:#e8e8e8;">运行时间:</div>
<div class="tag" style="left:301px;top:105px;width:50px;height:24px;background:#1f1f1f;"></div>
<div class="t " style="left:326.0px;top:107px;font-size:13px;line-height:20px;color:#3fb068;transform:translateX(-50%);">69 天</div>
<div class="card" style="left:7px;top:158px;height:159px"></div>
<svg style="left:28.200000000000045px;top:188px" width="22" height="18" viewBox="0 0 22 18"><g fill="#2fa360"><rect x="2.9" y="0.2" width="1.3" height="17.7"/><rect x="10.1" y="2" width="1.3" height="14.6"/><rect x="17.4" y="1.2" width="1.3" height="15.9"/><rect x="0.6" y="1.8" width="5.9" height="14.8" rx="0.6"/><rect x="7.9" y="6.3" width="5.7" height="5.7" rx="0.5"/><rect x="15.3" y="3.8" width="5.5" height="11.3" rx="0.6"/></g><g fill="#e6ece8"><rect x="2.6" y="3.9" width="1.9" height="10.6"/><rect x="10.1" y="8.4" width="1.3" height="1.5"/><rect x="17.4" y="5.8" width="1.3" height="7.2"/></g></svg>
<div class="t " style="left:60.5px;top:188px;font-size:23.6px;line-height:20px;color:#e8e8e8;transform-origin:0 50%;transform:scaleX(.9);">CPU</div>
<svg style="left:139px;top:175px" width="224" height="46" viewBox="1648 230 224 46"><path d="M1648 236.5 H1871.5" stroke="#2a2a2a" stroke-width="1"/><path d="M1648 245.5 H1871.5" stroke="#2a2a2a" stroke-width="1"/><path d="M1648 254.5 H1871.5" stroke="#2a2a2a" stroke-width="1"/><path d="M1648 263.5 H1871.5" stroke="#2a2a2a" stroke-width="1"/><path d="M1648 273 L1656 271.5 L1664 270.6 L1670 269.6 L1676 270.8 L1686 271.5 L1700 271.6 L1714 271.6 L1720 270.2 L1724 269.8 L1730 270.8 L1742 271.3 L1760 271.6 L1790 271.5 L1820 271.6 L1846 271.4 L1853 270.2 L1859 269.6 L1865 270.3 L1869 271.5 L1869.5 273 Z" fill="#3ecfa0"/><path d="M1666 271 L1670 269.4 L1675 271 Z M1720 270.3 L1724 269.2 L1729 270.8 Z M1852 272 L1860 271 L1866 272.6 Z" fill="#4b8bf5"/><path d="M1648 273.5 H1871.5" stroke="#d8d8d8" stroke-width="1"/></svg>
<div class="hr" style="left:28px;top:231px;width:335px"></div>
<div class="t " style="left:29.0px;top:250px;font-size:15.2px;line-height:20px;color:#e8e8e8;">1</div>
<svg style="left:53px;top:253.89999999999998px" width="248" height="12" viewBox="0 0 248 12"><rect x="0" y="0" width="3" height="12" fill="#5ac725"/><rect x="5" y="0" width="3" height="12" fill="#5ac725"/><rect x="10" y="0" width="3" height="12" fill="#ee2b36"/><rect x="15" y="0" width="3" height="12" fill="#ee2b36"/><rect x="20" y="0" width="3" height="12" fill="#2b2b2b"/><rect x="25" y="0" width="3" height="12" fill="#2b2b2b"/><rect x="30" y="0" width="3" height="12" fill="#2b2b2b"/><rect x="35" y="0" width="3" height="12" fill="#2b2b2b"/><rect x="40" y="0" width="3" height="12" fill="#2b2b2b"/><rect x="45" y="0" width="3" height="12" fill="#2b2b2b"/><rect x="50" y="0" width="3" height="12" fill="#2b2b2b"/><rect x="55" y="0" width="3" height="12" fill="#2b2b2b"/><rect x="60" y="0" width="3" height="12" fill="#2b2b2b"/><rect x="65" y="0" width="3" height="12" fill="#2b2b2b"/><rect x="70" y="0" width="3" height="12" fill="#2b2b2b"/><rect x="75" y="0" width="3" height="12" fill="#2b2b2b"/><rect x="80" y="0" width="3" height="12" fill="#2b2b2b"/><rect x="85" y="0" width="3" height="12" fill="#2b2b2b"/><rect x="90" y="0" width="3" height="12" fill="#2b2b2b"/><rect x="95" y="0" width="3" height="12" fill="#2b2b2b"/><rect x="100" y="0" width="3" height="12" fill="#2b2b2b"/><rect x="105" y="0" width="3" height="12" fill="#2b2b2b"/><rect x="110" y="0" width="3" height="12" fill="#2b2b2b"/><rect x="115" y="0" width="3" height="12" fill="#2b2b2b"/><rect x="120" y="0" width="3" height="12" fill="#2b2b2b"/><rect x="125" y="0" width="3" height="12" fill="#2b2b2b"/><rect x="130" y="0" width="3" height="12" fill="#2b2b2b"/><rect x="135" y="0" width="3" height="12" fill="#2b2b2b"/><rect x="140" y="0" width="3" height="12" fill="#2b2b2b"/><rect x="145" y="0" width="3" height="12" fill="#2b2b2b"/><rect x="150" y="0" width="3" height="12" fill="#2b2b2b"/><rect x="155" y="0" width="3" height="12" fill="#2b2b2b"/><rect x="160" y="0" width="3" height="12" fill="#2b2b2b"/><rect x="165" y="0" width="3" height="12" fill="#2b2b2b"/><rect x="170" y="0" width="3" height="12" fill="#2b2b2b"/><rect x="175" y="0" width="3" height="12" fill="#2b2b2b"/><rect x="180" y="0" width="3" height="12" fill="#2b2b2b"/><rect x="185" y="0" width="3" height="12" fill="#2b2b2b"/><rect x="190" y="0" width="3" height="12" fill="#2b2b2b"/><rect x="195" y="0" width="3" height="12" fill="#2b2b2b"/><rect x="200" y="0" width="3" height="12" fill="#2b2b2b"/><rect x="205" y="0" width="3" height="12" fill="#2b2b2b"/><rect x="210" y="0" width="3" height="12" fill="#2b2b2b"/><rect x="215" y="0" width="3" height="12" fill="#2b2b2b"/><rect x="220" y="0" width="3" height="12" fill="#2b2b2b"/><rect x="225" y="0" width="3" height="12" fill="#2b2b2b"/><rect x="230" y="0" width="3" height="12" fill="#2b2b2b"/><rect x="235" y="0" width="3" height="12" fill="#2b2b2b"/><rect x="240" y="0" width="3" height="12" fill="#2b2b2b"/><rect x="245" y="0" width="3" height="12" fill="#2b2b2b"/></svg>
<div class="t " style="left:363.0px;top:250px;font-size:15.2px;line-height:20px;color:#e8e8e8;transform:translateX(-100%);">6.1 %</div>
<div class="t " style="left:29.0px;top:275px;font-size:15.2px;line-height:20px;color:#e8e8e8;">2</div>
<svg style="left:53px;top:279.0px" width="248" height="12" viewBox="0 0 248 12"><rect x="0" y="0" width="3" height="12" fill="#5ac725"/><rect x="5" y="0" width="3" height="12" fill="#ee2b36"/><rect x="10" y="0" width="3" height="12" fill="#ee2b36"/><rect x="15" y="0" width="3" height="12" fill="#2b2b2b"/><rect x="20" y="0" width="3" height="12" fill="#2b2b2b"/><rect x="25" y="0" width="3" height="12" fill="#2b2b2b"/><rect x="30" y="0" width="3" height="12" fill="#2b2b2b"/><rect x="35" y="0" width="3" height="12" fill="#2b2b2b"/><rect x="40" y="0" width="3" height="12" fill="#2b2b2b"/><rect x="45" y="0" width="3" height="12" fill="#2b2b2b"/><rect x="50" y="0" width="3" height="12" fill="#2b2b2b"/><rect x="55" y="0" width="3" height="12" fill="#2b2b2b"/><rect x="60" y="0" width="3" height="12" fill="#2b2b2b"/><rect x="65" y="0" width="3" height="12" fill="#2b2b2b"/><rect x="70" y="0" width="3" height="12" fill="#2b2b2b"/><rect x="75" y="0" width="3" height="12" fill="#2b2b2b"/><rect x="80" y="0" width="3" height="12" fill="#2b2b2b"/><rect x="85" y="0" width="3" height="12" fill="#2b2b2b"/><rect x="90" y="0" width="3" height="12" fill="#2b2b2b"/><rect x="95" y="0" width="3" height="12" fill="#2b2b2b"/><rect x="100" y="0" width="3" height="12" fill="#2b2b2b"/><rect x="105" y="0" width="3" height="12" fill="#2b2b2b"/><rect x="110" y="0" width="3" height="12" fill="#2b2b2b"/><rect x="115" y="0" width="3" height="12" fill="#2b2b2b"/><rect x="120" y="0" width="3" height="12" fill="#2b2b2b"/><rect x="125" y="0" width="3" height="12" fill="#2b2b2b"/><rect x="130" y="0" width="3" height="12" fill="#2b2b2b"/><rect x="135" y="0" width="3" height="12" fill="#2b2b2b"/><rect x="140" y="0" width="3" height="12" fill="#2b2b2b"/><rect x="145" y="0" width="3" height="12" fill="#2b2b2b"/><rect x="150" y="0" width="3" height="12" fill="#2b2b2b"/><rect x="155" y="0" width="3" height="12" fill="#2b2b2b"/><rect x="160" y="0" width="3" height="12" fill="#2b2b2b"/><rect x="165" y="0" width="3" height="12" fill="#2b2b2b"/><rect x="170" y="0" width="3" height="12" fill="#2b2b2b"/><rect x="175" y="0" width="3" height="12" fill="#2b2b2b"/><rect x="180" y="0" width="3" height="12" fill="#2b2b2b"/><rect x="185" y="0" width="3" height="12" fill="#2b2b2b"/><rect x="190" y="0" width="3" height="12" fill="#2b2b2b"/><rect x="195" y="0" width="3" height="12" fill="#2b2b2b"/><rect x="200" y="0" width="3" height="12" fill="#2b2b2b"/><rect x="205" y="0" width="3" height="12" fill="#2b2b2b"/><rect x="210" y="0" width="3" height="12" fill="#2b2b2b"/><rect x="215" y="0" width="3" height="12" fill="#2b2b2b"/><rect x="220" y="0" width="3" height="12" fill="#2b2b2b"/><rect x="225" y="0" width="3" height="12" fill="#2b2b2b"/><rect x="230" y="0" width="3" height="12" fill="#2b2b2b"/><rect x="235" y="0" width="3" height="12" fill="#2b2b2b"/><rect x="240" y="0" width="3" height="12" fill="#2b2b2b"/><rect x="245" y="0" width="3" height="12" fill="#2b2b2b"/></svg>
<div class="t " style="left:363.0px;top:275px;font-size:15.2px;line-height:20px;color:#e8e8e8;transform:translateX(-100%);">5.8 %</div>
<div class="card" style="left:7px;top:331px;height:162px"></div>
<svg style="left:27.200000000000045px;top:363px" width="24" height="15.2" viewBox="0 0 23 15" preserveAspectRatio="none"><path d="M6 14.2 H17.5 A4.4 4.4 0 0 0 18.3 5.5 A6.3 6.3 0 0 0 6.2 4.8 A4.8 4.8 0 0 0 6 14.2 Z" fill="#dde9e0" stroke="#34a265" stroke-width="1.7"/></svg>
<div class="t " style="left:61.0px;top:361px;font-size:23px;line-height:20px;color:#e8e8e8;">内存</div>
<div class="tag" style="left:186px;top:362px;width:50px;height:24px;background:#34a265;"></div>
<div class="t " style="left:211.0px;top:365px;font-size:13px;line-height:20px;color:#fff;transform:translateX(-50%);">1.8 G</div>
<div class="hr" style="left:28px;top:404px;width:218px"></div>
<svg style="left:256px;top:372px" width="80" height="80" viewBox="1765 427 80 80"><path d="M1804.75 433.40 A33.6 33.6 0 0 1 1810.93 500.03 L1807.93 484.00 A17.3 17.3 0 0 0 1804.75 449.70 Z" fill="#d14447" stroke="#f2f2f2" stroke-width="1.2"/><path d="M1810.93 500.03 A33.6 33.6 0 0 1 1784.91 439.89 L1794.53 453.04 A17.3 17.3 0 0 0 1807.93 484.00 Z" fill="#8c8c8c" stroke="#f2f2f2" stroke-width="1.2"/><path d="M1784.91 439.89 A33.6 33.6 0 0 1 1804.75 433.40 L1804.75 449.70 A17.3 17.3 0 0 0 1794.53 453.04 Z" fill="#34a265" stroke="#f2f2f2" stroke-width="1.2"/></svg>
<div class="a" style="left:36.59999999999991px;top:427.2px;width:12px;height:12px;border-radius:50%;background:#2a1718"></div>
<div class="a" style="left:39.399999999999906px;top:430.0px;width:6.4px;height:6.4px;border-radius:50%;background:#d94a4f"></div>
<div class="t " style="left:54.0px;top:423px;font-size:14.7px;line-height:20px;color:#e8e8e8;">已使用</div>
<div class="a" style="left:112.59999999999991px;top:427.2px;width:12px;height:12px;border-radius:50%;background:#222"></div>
<div class="a" style="left:115.3999999999999px;top:430.0px;width:6.4px;height:6.4px;border-radius:50%;background:#8c8c8c"></div>
<div class="t " style="left:128.8px;top:423px;font-size:14.7px;line-height:20px;color:#e8e8e8;">缓存</div>
<div class="a" style="left:180px;top:427.2px;width:12px;height:12px;border-radius:50%;background:#16241b"></div>
<div class="a" style="left:182.8px;top:430.0px;width:6.4px;height:6.4px;border-radius:50%;background:#34a265"></div>
<div class="t " style="left:196.3px;top:423px;font-size:14.7px;line-height:20px;color:#e8e8e8;">空闲</div>
<div class="t " style="left:69.5px;top:448px;font-size:16px;line-height:20px;color:#e8e8e8;transform:translateX(-50%);">825.8 M</div>
<div class="t " style="left:137.3px;top:448px;font-size:16px;line-height:20px;color:#e8e8e8;transform:translateX(-50%);">753.0 M</div>
<div class="t " style="left:205.0px;top:448px;font-size:16px;line-height:20px;color:#e8e8e8;transform:translateX(-50%);">176.3 M</div>
<div class="card" style="left:7px;top:505px;height:175px"></div>
<svg style="left:22.799999999999955px;top:530px" width="22.5" height="17.5" viewBox="0 0 22 17" fill="none" stroke="#34a265" stroke-width="2" stroke-linecap="round"><path d="M1 5.8 A14.5 14.5 0 0 1 21 5.8"/><path d="M4.2 9.3 A10 10 0 0 1 17.8 9.3"/><path d="M7.4 12.5 A5.4 5.4 0 0 1 14.6 12.5"/><circle cx="11" cy="15.2" r="1.7" fill="#34a265" stroke="none"/></svg>
<div class="t " style="left:55.5px;top:530px;font-size:23px;line-height:20px;color:#e8e8e8;">网络</div>
<svg style="left:116px;top:515px" width="226" height="50" viewBox="1625 570 226 50" fill="none"><path d="M1626 578.2 H1849.5" stroke="#2b2b2b" stroke-width="1"/><path d="M1626 585.5 H1849.5" stroke="#2b2b2b" stroke-width="1"/><path d="M1626 593 H1849.5" stroke="#2b2b2b" stroke-width="1"/><path d="M1626 600.4 H1849.5" stroke="#2b2b2b" stroke-width="1"/><path d="M1626 607.8 H1849.5" stroke="#2b2b2b" stroke-width="1"/><path d="M1626 615.5 H1849.5" stroke="#d8d8d8" stroke-width="1.2"/><path d="M1628.5 609.1 L1638.8 612.5 L1656.6 612.5 L1665.6 606.9 L1674.4 612.1 L1683.8 599.8 L1693.2 609.7 L1701.6 612.5 L1719.5 612.5 L1728.3 608.4 L1737.3 613.4 L1746.3 605.0 L1755.5 580.6 L1764.5 612.1 L1772.9 611.6 L1790.7 608.4 L1800.1 613.4 L1808.9 604.1 L1817.9 612.5 L1827.3 612.5 L1835.7 611.0 L1845.6 612.9" stroke="#4b8bf5" stroke-width="2.4" stroke-linejoin="round"/><path d="M1628.5 610.3 L1638.8 614.4 L1656.6 614.4 L1665.6 611.0 L1674.4 614.4 L1683.8 606.9 L1693.2 611.6 L1701.6 614.4 L1719.5 614.4 L1728.3 611.6 L1737.3 614.8 L1746.3 610.3 L1755.5 597.5 L1764.5 614.4 L1772.9 613.4 L1782.3 613.1 L1790.7 609.1 L1800.1 614.8 L1808.9 605.0 L1817.9 614.4 L1827.3 614.4 L1835.7 614.4 L1845.6 614.4" stroke="#3ed69a" stroke-width="2.4" stroke-linejoin="round"/></svg>
<div class="hr" style="left:23px;top:574px;width:328px"></div>
<div class="a" style="left:63.799999999999955px;top:596.3px;width:12px;height:12px;border-radius:50%;background:#1a2a14"></div>
<div class="a" style="left:66.59999999999995px;top:599.0999999999999px;width:6.4px;height:6.4px;border-radius:50%;background:#52c41a"></div>
<div class="t b" style="left:172.4px;top:593px;font-size:14.7px;line-height:20px;color:#e8e8e8;transform:translateX(-50%);">速度</div>
<div class="t b" style="left:290.2px;top:593px;font-size:14.7px;line-height:20px;color:#e8e8e8;transform:translateX(-50%);">已用流量</div>
<div class="t " style="left:69.8px;top:618px;font-size:14.7px;line-height:20px;color:#e8e8e8;transform:translateX(-50%);">上传</div>
<div class="t " style="left:69.8px;top:643px;font-size:14.7px;line-height:20px;color:#e8e8e8;transform:translateX(-50%);">下载</div>
<div class="t " style="left:172.2px;top:618px;font-size:16px;line-height:20px;color:#e8e8e8;transform:translateX(-50%);">2.7 K/s</div>
<div class="t " style="left:172.2px;top:643px;font-size:16px;line-height:20px;color:#e8e8e8;transform:translateX(-50%);">1.1 K/s</div>
<div class="t " style="left:290.0px;top:618px;font-size:16px;line-height:20px;color:#e8e8e8;transform:translateX(-50%);">1.6 M</div>
<div class="t " style="left:290.0px;top:643px;font-size:16px;line-height:20px;color:#e8e8e8;transform:translateX(-50%);">1.1 M</div>
<div class="card" style="left:7px;top:694px;height:271px"></div>
<svg style="left:23.5px;top:717.5px" width="21" height="20" viewBox="0 0 21 20"><path d="M1.5 0 H15.5 L21 5.5 V18.5 Q21 20 19.5 20 H1.5 Q0 20 0 18.5 V1.5 Q0 0 1.5 0 Z" fill="#34a265"/><rect x="6" y="2.6" width="7" height="3" fill="#141414"/><circle cx="10.5" cy="12.8" r="3.9" fill="#141414"/><circle cx="10.5" cy="12.8" r="1.6" fill="#34a265"/></svg>
<div class="t " style="left:55.5px;top:718px;font-size:23px;line-height:20px;color:#e8e8e8;">磁盘</div>
<div class="tag" style="left:158px;top:716px;width:108px;height:24px;background:#34a265;"></div>
<div class="t " style="left:212.0px;top:719px;font-size:13px;line-height:20px;color:#fff;transform:translateX(-50%);">23.4 G / 51.5 G</div>
<div class="hr" style="left:23px;top:762px;width:253px"></div>
<div class="a" style="left:295px;top:707px;width:38px;height:125px;border:2px solid #e6e8ee;border-radius:9px;background:linear-gradient(to bottom,#fff 0,#fff 67.5px,#34a265 67.5px,#7a8058 121px);"></div>
<div class="a" style="left:49.200000000000045px;top:784.2px;width:12px;height:12px;border-radius:50%;background:#1a2a14"></div>
<div class="a" style="left:52.00000000000004px;top:787.0px;width:6.4px;height:6.4px;border-radius:50%;background:#52c41a"></div>
<div class="t b" style="left:118.4px;top:781px;font-size:14.7px;line-height:20px;color:#e8e8e8;transform:translateX(-50%);">类型</div>
<div class="t b" style="left:181.5px;top:781px;font-size:14.7px;line-height:20px;color:#e8e8e8;transform:translateX(-50%);">读 / s</div>
<div class="t b" style="left:244.4px;top:781px;font-size:14.7px;line-height:20px;color:#e8e8e8;transform:translateX(-50%);">写 / s</div>
<div class="tag" style="left:34px;top:804.5px;width:41px;height:23.5px;background:#14282b;"></div>
<div class="t " style="left:54.5px;top:806px;font-size:13px;line-height:20px;color:#3fb8a8;transform:translateX(-50%);">vda</div>
<div class="tag" style="left:96px;top:804.5px;width:45px;height:23.5px;background:#2e2414;"></div>
<div class="t " style="left:118.5px;top:806px;font-size:13px;line-height:20px;color:#e8a838;transform:translateX(-50%);">ext4</div>
<div class="t " style="left:181.5px;top:806px;font-size:16px;line-height:20px;color:#e8e8e8;transform:translateX(-50%);">0</div>
<div class="t " style="left:244.8px;top:806px;font-size:16px;line-height:20px;color:#e8e8e8;transform:translateX(-50%);">215.7 K</div>
<div class="a" style="left:23px;top:859px;width:328px;height:45px;background:#1f1f1f;border-radius:9px 9px 0 0;border-bottom:1px solid #2e2e2e"></div>
<div class="a" style="left:104.5px;top:870px;width:1px;height:24px;background:#303030"></div>
<div class="a" style="left:186.5px;top:870px;width:1px;height:24px;background:#303030"></div>
<div class="a" style="left:268.5px;top:870px;width:1px;height:24px;background:#303030"></div>
<div class="t b" style="left:33.0px;top:872px;font-size:14.7px;line-height:20px;color:#e8e8e8;">挂载</div>
<div class="t b" style="left:115.0px;top:872px;font-size:14.7px;line-height:20px;color:#e8e8e8;">大小</div>
<div class="t b" style="left:197.5px;top:872px;font-size:14.7px;line-height:20px;color:#e8e8e8;">可用</div>
<div class="t b" style="left:310.5px;top:872px;font-size:14.7px;line-height:20px;color:#e8e8e8;transform:translateX(-50%);">已用%</div>
<div class="tag" style="left:33px;top:916px;width:25px;height:24px;background:#14282b;"></div>
<div class="t " style="left:45.5px;top:919px;font-size:16px;line-height:20px;color:#2bb8c8;transform:translateX(-50%);">/</div>
<div class="t " style="left:115.5px;top:918px;font-size:16px;line-height:20px;color:#e8e8e8;">51.5 G</div>
<div class="t " style="left:197.5px;top:918px;font-size:16px;line-height:20px;color:#e8e8e8;">28.1 G</div>
<div class="tag" style="left:283px;top:916px;width:45px;height:24px;background:#34a265;"></div>
<div class="t b" style="left:305.5px;top:918px;font-size:13px;line-height:20px;color:#fff;transform:translateX(-50%);">44%</div>
</div>
<div class="a" style="left:1884px;top:55px;width:36px;height:939px;background:#1f1f1f;border-left:1px solid #333"></div>
<div class="t g" style="left:1902px;top:79px;font-size:15px;transform:translate(-50%,-50%) rotate(90deg)">监控</div>
<div class="t " style="left:1902px;top:164.5px;font-size:15px;transform:translate(-50%,-50%) rotate(90deg)">书签管理</div>
<div class="t " style="left:1902px;top:244.8px;font-size:15px;transform:translate(-50%,-50%) rotate(90deg)">上传列表</div>
<div class="t " style="left:1902px;top:324.8px;font-size:15px;transform:translate(-50%,-50%) rotate(90deg)">下载列表</div>
<svg style="left:1898px;top:102.6px" width="9" height="9" viewBox="0 0 9 9"><path d="M0.5 0.5 L8.5 8.5 M8.5 0.5 L0.5 8.5" stroke="#a8a8a8" stroke-width="1.7" fill="none"/></svg>
<svg style="left:1894.5px;top:738.5px" width="16" height="16" viewBox="0 0 16 16" fill="none" stroke="#e6e6e6" stroke-width="1.2"><rect x="0.6" y="0.6" width="14.8" height="14.8"/><path d="M5.2 4.8 L10.4 8 L5.2 11.2"/></svg>
<svg style="left:1894.5px;top:784.9px" width="16" height="13" viewBox="0 0 16 13" fill="none" stroke="#e6e6e6" stroke-width="1.4"><path d="M4.2 1.2 H16 M4.2 6.5 H16 M4.2 11.8 H16"/><path d="M0 1.2 H1.8 M0 6.5 H1.8 M0 11.8 H1.8"/></svg>
<svg style="left:1894.5px;top:828px" width="16" height="16" viewBox="0 0 15 15" fill="none" stroke="#e6e6e6" stroke-width="1.3"><path d="M13.6 7.5 A6.3 6.3 0 1 1 11.2 2.55"/><path d="M9.6 3.9 L13.5 4.6 L13.2 0.7 Z" fill="#e6e6e6" stroke="none"/></svg>
<svg style="left:1894.5px;top:872.5px" width="16" height="16" viewBox="0 0 16 16" fill="none" stroke="#e6e6e6" stroke-width="1.2"><path d="M0.6 0.6 H11.6 L15.4 4.4 V15.4 H0.6 Z"/><path d="M4 0.6 V4.6 H10.4 V0.6"/><circle cx="8" cy="10.4" r="1.9"/></svg>
<svg style="left:1894.0px;top:916.3px" width="17" height="17" viewBox="0 0 17 17" fill="none" stroke="#e6e6e6" stroke-width="1.3"><circle cx="8.5" cy="8.5" r="5"/><circle cx="8.5" cy="8.5" r="2.1" fill="#e6e6e6" stroke="none"/><path d="M8.5 0 V3.5 M8.5 13.5 V17 M0 8.5 H3.5 M13.5 8.5 H17"/></svg>
<svg style="left:1893.5px;top:960.4px" width="18" height="18" viewBox="0 0 20 20" fill="none" stroke="#e6e6e6" stroke-width="1.4" stroke-linejoin="round"><path d="M8.51 3.78 L8.79 1.49 L11.21 1.49 L11.49 3.78 L13.34 4.54 L15.16 3.12 L16.88 4.84 L15.46 6.66 L16.22 8.51 L18.51 8.79 L18.51 11.21 L16.22 11.49 L15.46 13.34 L16.88 15.16 L15.16 16.88 L13.34 15.46 L11.49 16.22 L11.21 18.51 L8.79 18.51 L8.51 16.22 L6.66 15.46 L4.84 16.88 L3.12 15.16 L4.54 13.34 L3.78 11.49 L1.49 11.21 L1.49 8.79 L3.78 8.51 L4.54 6.66 L3.12 4.84 L4.84 3.12 L6.66 4.54 Z"/><circle cx="10" cy="10" r="2.9"/></svg>
<div class="a" style="left:36px;top:993.5px;width:1884px;height:36.5px;background:#1f1f1f;border-top:1px solid #333"></div>
</body></html>
